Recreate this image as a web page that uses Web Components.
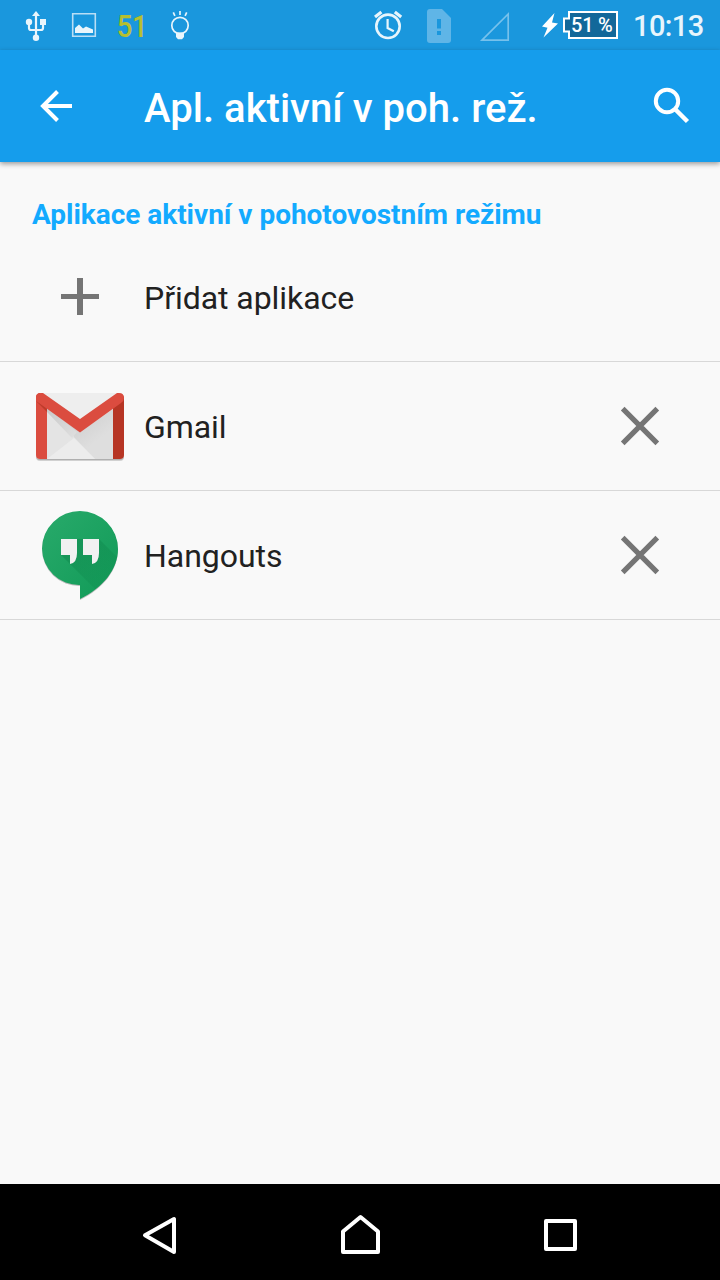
<!DOCTYPE html>
<html lang="cs">
<head>
<meta charset="utf-8">
<title>Apl. aktivní v poh. rež.</title>
<style>
html,body{margin:0;height:100%}
body{font-family:Roboto,"Noto Sans",sans-serif;background:#f9f9f9;overflow:hidden}
</style>
</head>
<body>
<phone-screen>
  <status-bar slot="top"></status-bar>
  <app-bar slot="top">Apl. aktivní v poh. rež.</app-bar>
  <section-title>Aplikace aktivní v pohotovostním režimu</section-title>
  <app-row icon="plus">Přidat aplikace</app-row>
  <app-row icon="gmail" removable>Gmail</app-row>
  <app-row icon="hangouts" removable>Hangouts</app-row>
  <nav-bar slot="bottom"></nav-bar>
</phone-screen>
<script>
function define(name, html) {
  customElements.define(name, class extends HTMLElement {
    constructor() {
      super();
      const t = document.createElement('template');
      t.innerHTML = html;
      this.attachShadow({mode: 'open'}).append(t.content.cloneNode(true));
    }
  });
}

define('phone-screen', `
<style>
:host{display:flex;flex-direction:column;width:720px;height:1280px;background:#f9f9f9}
main{flex:1;display:flex;flex-direction:column}
</style>
<slot name="top"></slot><main><slot></slot></main><slot name="bottom"></slot>`);

define('status-bar', `
<style>
:host{display:flex;height:50px;background:#1a97dd;justify-content:space-between;color:#e8f5fc}
.side{display:flex;align-items:center}
.left{padding-left:12px}
svg{display:block;flex:none}
.count{width:48px;text-align:center;font-size:32px;line-height:50px;font-weight:500;color:#b6bf2f;letter-spacing:-.5px;padding-top:2px;box-sizing:border-box;transform:scaleX(.86)}
.battery{position:relative;width:56px;height:50px}
.battery svg{position:absolute;left:0;top:0}
.battery span{position:absolute;left:9px;top:0;font-size:20px;line-height:50px;font-weight:500;color:#fff;white-space:nowrap;letter-spacing:-.2px}
.clock{width:102px;box-sizing:border-box;padding:2px 0 0 15px;font-size:29px;line-height:50px;font-weight:500;white-space:nowrap;letter-spacing:-.6px}
</style>
<div class="side left">
<svg width="48" height="50" viewBox="12 0 48 50" fill="none" stroke="#e8f5fc" stroke-width="2.2"><path d="M36 37V14M29 23v5q0 2 2 2h10q2 0 2-2v-5"/><g fill="#e8f5fc" stroke="none"><path d="M36 11l4 5h-8z"/><circle cx="29" cy="22" r="3.2"/><path d="M40 19h6v6h-6z"/><circle cx="36" cy="37.7" r="3.2"/></g></svg>
<svg width="48" height="50" viewBox="60 0 48 50"><path d="M72.7 13.7h22.6v22.6H72.7z" fill="none" stroke="#b9def5" stroke-width="1.6"/><path d="M75 33v-5l4-3.5 4 4 3-2 7 3V33z" fill="#e8f5fc"/></svg>
<div class="count">51</div>
<svg width="48" height="50" viewBox="156 0 48 50" fill="none" stroke="#e8f5fc" stroke-width="1.7"><circle cx="180" cy="25.5" r="8.200"/><path d="M180 11v4M173.300 12.300l1.600 3.500M186.700 12.300l-1.600 3.500"/><path d="M176 32.500h8v4.500l-2 2.300h-4l-2-2.300z" fill="#e8f5fc" stroke="none"/></svg>
</div>
<div class="side">
<svg width="192" height="50" viewBox="370 0 192 50"><g fill="none" stroke="#e8f5fc" stroke-width="2.6"><circle cx="388" cy="26.3" r="11.7"/><path d="M387.600 19v9l6.200 3.300" stroke-width="2.2"/><path d="M375 17l6.400-5M401.200 17l-6.400-5" stroke-width="3.2"/></g>
<path d="M430 9h12l9 9v22q0 3-3 3h-18q-3 0-3-3V12q0-3 3-3z" fill="#5fb5e7"/><path d="M437 19h4v9.500h-4zM437 31h4v4h-4z" fill="#1a97dd"/>
<path d="M482 40.200L508.200 14V40.200z" fill="none" stroke="#76c1ec" stroke-width="1.700"/>
<path d="M554.500 13L542 26.500l5.500 1.300L543.500 37.500 558 23.500l-6-1z" fill="#fff"/></svg>
<div class="battery"><svg width="58" height="50" viewBox="562 0 58 50"><path d="M569 12h48v26h-48v-6.500h-5v-13h5z" fill="#12689a" stroke="#fff" stroke-width="2"/></svg><span>51 %</span></div>
<div class="clock">10:13</div>
</div>`);

define('app-bar', `
<style>
:host{display:flex;align-items:center;height:112px;background:#159dec;color:#fff;box-shadow:0 2px 5px rgba(0,0,0,.38);position:relative}
svg{display:block;flex:none}
h1{margin:0;flex:1;font-size:40px;line-height:48px;font-weight:500;white-space:nowrap;padding-top:6px;letter-spacing:.03px}
</style>
<svg width="144" height="112" viewBox="0 50 144 112" fill="none" stroke="#fff" stroke-width="4"><path d="M72 106H43M57.500 91.500L43 106l14.500 14.500"/></svg>
<h1><slot></slot></h1>
<svg width="96" height="112" viewBox="624 50 96 112" fill="none" stroke="#fff"><circle cx="667" cy="101" r="11.200" stroke-width="4"/><path d="M675.500 109.500l12 12" stroke-width="4.500"/></svg>`);

define('section-title', `
<style>:host{display:block;height:71px;box-sizing:border-box;padding:33px 32px 0;font-size:28px;line-height:40px;font-weight:700;color:#13aaff;white-space:nowrap;letter-spacing:-.03px}</style><slot></slot>`);

const icons = {
plus: `<svg width="144" height="128" viewBox="0 233 144 128"><path d="M61 294h38v5H61zM77 278h6v37h-6z" fill="#757575"/></svg>`,
gmail: `<svg width="144" height="128" viewBox="0 362 144 128">
<defs><linearGradient id="s" x1="0" y1="0" x2="1" y2="1"><stop offset="0" stop-color="#c4c4c4"/><stop offset=".7" stop-color="#dedede"/></linearGradient><linearGradient id="l" x1="0" y1="0" x2="1" y2="1"><stop offset="0" stop-color="#c9c9c9"/><stop offset="1" stop-color="#dfdfdf"/></linearGradient></defs>
<rect x="36" y="394" width="88" height="67" rx="4" fill="#000" opacity=".16"/><rect x="36" y="394" width="88" height="66" rx="4" fill="#000" opacity=".16"/>
<rect x="36" y="393" width="88" height="66" rx="4" fill="#eeeeee"/>
<path d="M47 410l33 24 33-24v49H47z" fill="#e5e5e5"/><path d="M47 409l48 50h18v-50l-33 23z" fill="url(#s)"/><path d="M47 409l27 28-27 22z" fill="#e4e4e4"/><path d="M47 407v5l25 26 5-6z" fill="url(#l)"/><path d="M47 459l27-21 21 21z" fill="#ececec"/>
<path d="M40 393h-1q-3 1-3 4v58q0 4 4 4h7v-52z" fill="#db4c3f"/><path d="M113 407l11-11v59q0 4-4 4h-7z" fill="#b63524"/>
<path d="M36 401l11 11v-5z" fill="#bd3b2b"/>
<path d="M36 398q0-5 5-5h2l37 26 37-26h2q5 0 5 5 0 3-3 5L80 432.500 39 403q-3-2-3-5z" fill="#db4c3f"/></svg>`,
hangouts: `<svg width="144" height="128" viewBox="0 491 144 128">
<defs><linearGradient id="g" x1="0" y1="0" x2="1" y2="1"><stop offset="0" stop-color="#29aa6b"/><stop offset="1" stop-color="#109a57"/></linearGradient><linearGradient id="d" x1="0" y1="0" x2="1" y2="1"><stop offset="0" stop-color="#087b43" stop-opacity=".65"/><stop offset="1" stop-color="#087b43" stop-opacity="0.05"/></linearGradient>
<clipPath id="c"><path d="M80 511a38 38 0 0 1 38 38c0 20-15 39-38 50v-14a37 37 0 0 1-38-36.500A38 38 0 0 1 80 511z"/></clipPath></defs>
<path transform="translate(0 1)" d="M80 511a38 38 0 0 1 38 38c0 20-15 39-38 50v-14a37 37 0 0 1-38-36.500A38 38 0 0 1 80 511z" opacity=".25"/>
<g clip-path="url(#c)"><path d="M40 510h80v90H40z" fill="url(#g)"/><path d="M61 555l37 37 30-30V568l-29-29-22 0v16z" fill="url(#d)" opacity=".65"/></g>
<path d="M61 539h16v14q0 10-7 11v-9h-9zM83 539h16v14q0 10-7 11v-9h-9z" fill="#f1f1f1"/></svg>`
};

customElements.define('app-row', class extends HTMLElement {
  connectedCallback() {
    if (this.shadowRoot) return;
    this.attachShadow({mode: 'open'}).innerHTML = `
<style>
:host{display:flex;align-items:center;height:128px;border-bottom:1px solid #d8d8d8;color:#212121}
svg{display:block;flex:none}
.label{flex:1;font-size:32px;line-height:40px;padding-top:2px;white-space:nowrap;letter-spacing:-.05px}
</style>${icons[this.getAttribute('icon')]}<div class="label"><slot></slot></div>${this.hasAttribute('removable') ? `<svg width="160" height="128" viewBox="560 362 160 128"><path d="M622.700 408.700l34.600 34.600M657.300 408.700l-34.600 34.600" stroke="#757575" stroke-width="5.200"/></svg>` : ''}`;
  }
});

define('nav-bar', `
<style>
:host{display:flex;height:96px;background:#000;justify-content:center}
svg{display:block;flex:none}
</style>
<svg width="200" height="96" viewBox="60 1184 200 96" fill="none" stroke="#fff" stroke-width="4" stroke-linejoin="round"><path d="M145 1235.300L174 1219v33z"/></svg>
<svg width="200" height="96" viewBox="260 1184 200 96" fill="none" stroke="#fff" stroke-width="4" stroke-linejoin="round"><path d="M343 1252v-20.500l17.500-14.500 17.500 14.500V1252z"/></svg>
<svg width="200" height="96" viewBox="460 1184 200 96" fill="none" stroke="#fff" stroke-width="4" stroke-linejoin="round"><path d="M546 1221h29v28h-29z"/></svg>`);
</script>
</body>
</html>
